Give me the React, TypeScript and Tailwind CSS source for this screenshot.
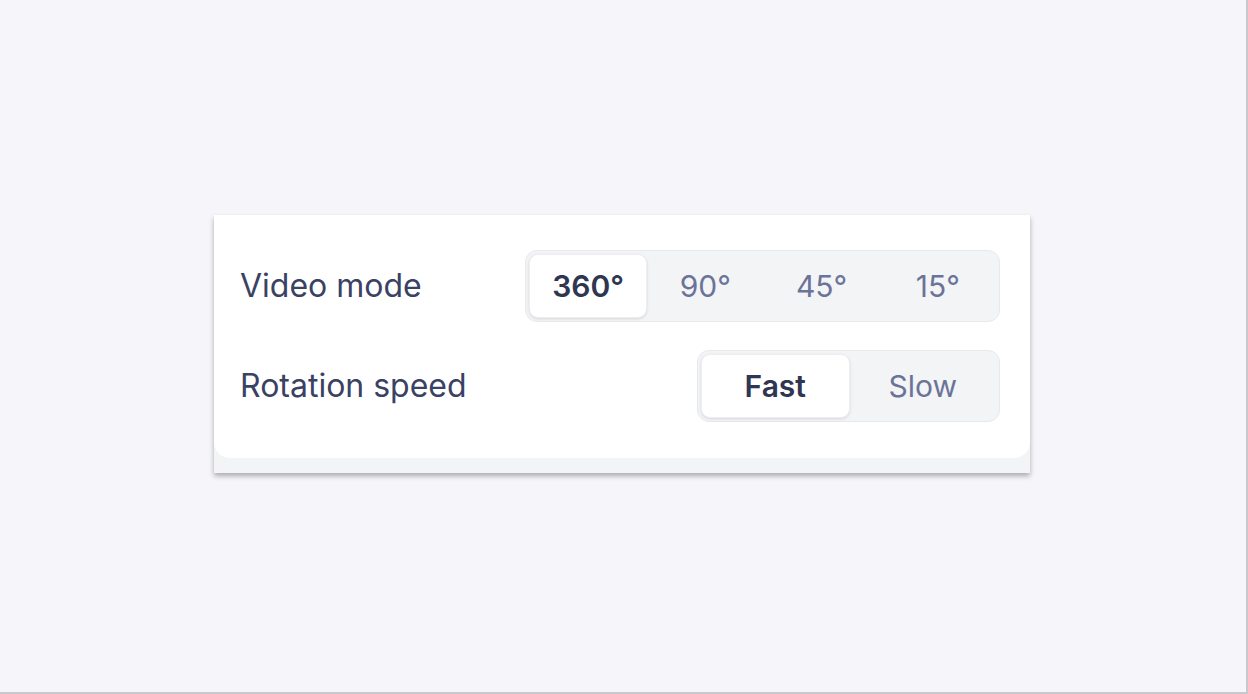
import { useState } from "react";

type SegmentedProps = {
  options: string[];
  value: string;
  onChange: (v: string) => void;
  className?: string;
};

function Segmented({ options, value, onChange, className }: SegmentedProps) {
  return (
    <div
      className={
        "flex h-[72px] rounded-[12px] border border-[#e8e9ee] bg-[#f3f4f6] p-[3px] " +
        (className ?? "")
      }
    >
      {options.map((opt) => {
        const active = opt === value;
        return (
          <button
            key={opt}
            type="button"
            onClick={() => onChange(opt)}
            className={
              active
                ? "flex flex-1 items-center justify-center rounded-[9px] border border-[#eceef2] bg-white text-[30px] font-semibold text-[#2f3652] shadow-[0_1px_3px_rgba(0,0,0,0.12)]"
                : "flex flex-1 items-center justify-center rounded-[9px] text-[30px] font-normal text-[#6c7398]"
            }
          >
            {opt}
          </button>
        );
      })}
    </div>
  );
}

export default function App() {
  const [mode, setMode] = useState("360°");
  const [speed, setSpeed] = useState("Fast");

  return (
    <div
      className="flex h-[694px] w-full items-center justify-center border-r-2 border-b-2 border-[#c9c9cd] bg-[#f6f6fa] pr-[2px] pb-[4px]"
      style={{ fontFamily: "Inter, 'Noto Sans', sans-serif" }}
    >
      <div className="w-[816px] bg-[#f3f4f6] pb-[15px] shadow-[0_3px_5px_rgba(0,0,0,0.3)]">
        <div className="flex flex-col gap-[28px] rounded-b-2xl bg-white pt-[35px] pr-[30px] pb-[36px] pl-[26px]">
          {/* Video mode */}
          <div className="flex items-center justify-between">
            <span className="text-[32px] text-[#3a4264]">Video mode</span>
            <Segmented
              options={["360°", "90°", "45°", "15°"]}
              value={mode}
              onChange={setMode}
              className="w-[475px]"
            />
          </div>

          {/* Rotation speed */}
          <div className="flex items-center justify-between">
            <span className="text-[32px] text-[#3a4264]">Rotation speed</span>
            <Segmented
              options={["Fast", "Slow"]}
              value={speed}
              onChange={setSpeed}
              className="w-[303px]"
            />
          </div>
        </div>
      </div>
    </div>
  );
}
